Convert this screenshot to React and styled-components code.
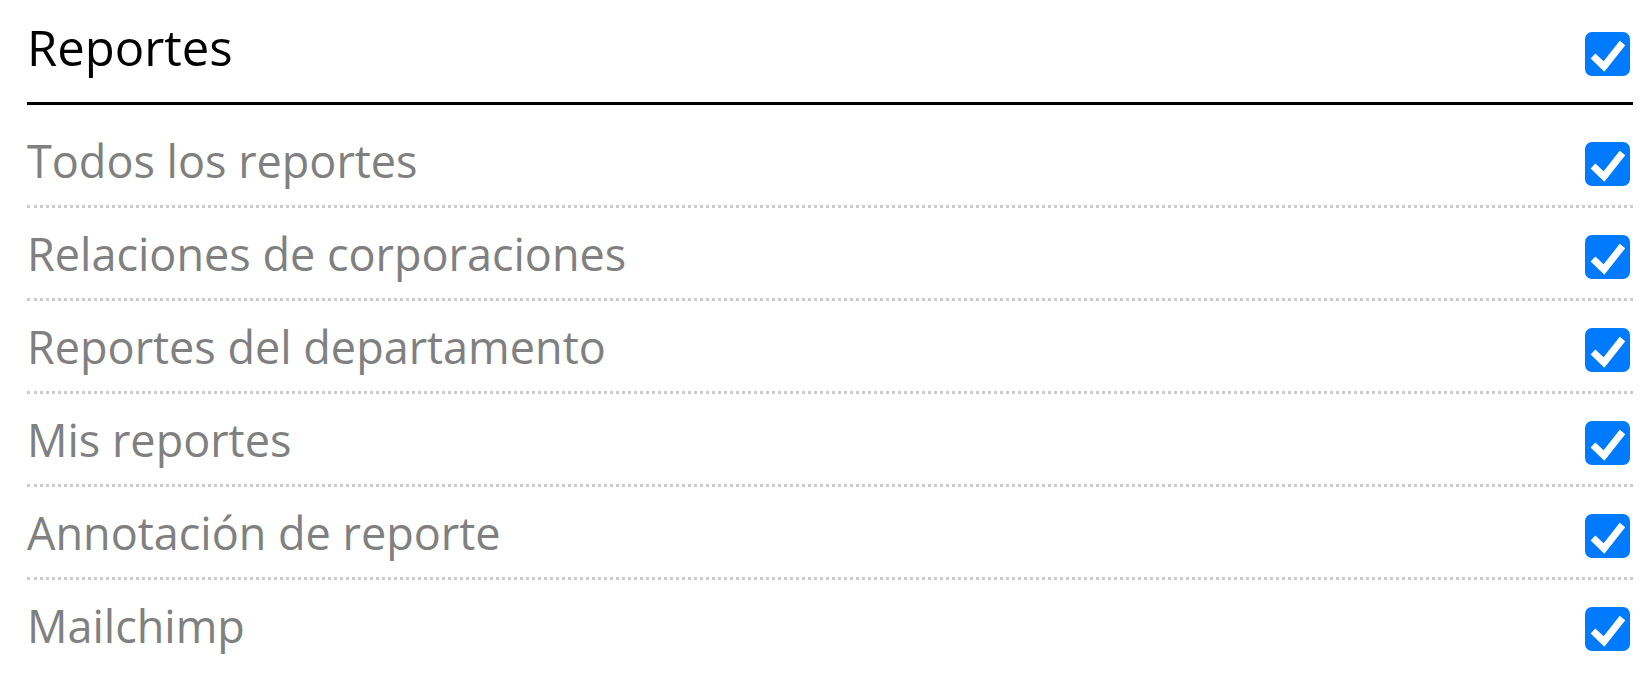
import React from "react";
import styled, { createGlobalStyle } from "styled-components";

const Global = createGlobalStyle`
  html, body { margin: 0; padding: 0; background: #fff; }
  body { font-family: "Open Sans", "Noto Sans", sans-serif; }
`;

const Panel = styled.section`
  padding: 0 19px 0 27px;
`;

const Header = styled.div`
  display: flex;
  justify-content: space-between;
  align-items: flex-start;
  height: 91px;
  padding-top: 11px;
  border-bottom: 3px solid #000;
`;

const Title = styled.h2`
  margin: 0;
  font-size: 49px;
  line-height: 72px;
  font-weight: 400;
  color: #000;
`;

const List = styled.ul`
  list-style: none;
  margin: 10px 0 0;
  padding: 0;
`;

const Row = styled.li`
  display: flex;
  justify-content: space-between;
  align-items: center;
  height: 90px;
  border-bottom: 3px dotted #cccccc;
  &:last-child { border-bottom: none; }
`;

const Label = styled.span`
  font-size: 45px;
  line-height: 67px;
  color: #808080;
`;

const Box = styled.span`
  display: flex;
  align-items: center;
  justify-content: center;
  width: 45px;
  height: 44px;
  margin-right: 3px;
  border-radius: 7px;
  background: #007bff;
  margin-top: ${(p) => p.$offset || 0}px;
  flex: none;
`;

function Check({ offset }) {
  return (
    <Box $offset={offset} role="checkbox" aria-checked="true">
      <svg width="45" height="44" viewBox="0 0 45 44">
        <polyline
          points="8,24 19,34.5 37.5,11"
          fill="none"
          stroke="#fff"
          strokeWidth="7"
          strokeLinejoin="miter"
        />
      </svg>
    </Box>
  );
}

const items = [
  "Todos los reportes",
  "Relaciones de corporaciones",
  "Reportes del departamento",
  "Mis reportes",
  "Annotación de reporte",
  "Mailchimp",
];

export default function App() {
  return (
    <>
      <Global />
      <Panel>
        <Header>
          <Title>Reportes</Title>
          <Check offset={21} />
        </Header>
        <List>
          {items.map((t) => (
            <Row key={t}>
              <Label>{t}</Label>
              <Check offset={8} />
            </Row>
          ))}
        </List>
      </Panel>
    </>
  );
}
